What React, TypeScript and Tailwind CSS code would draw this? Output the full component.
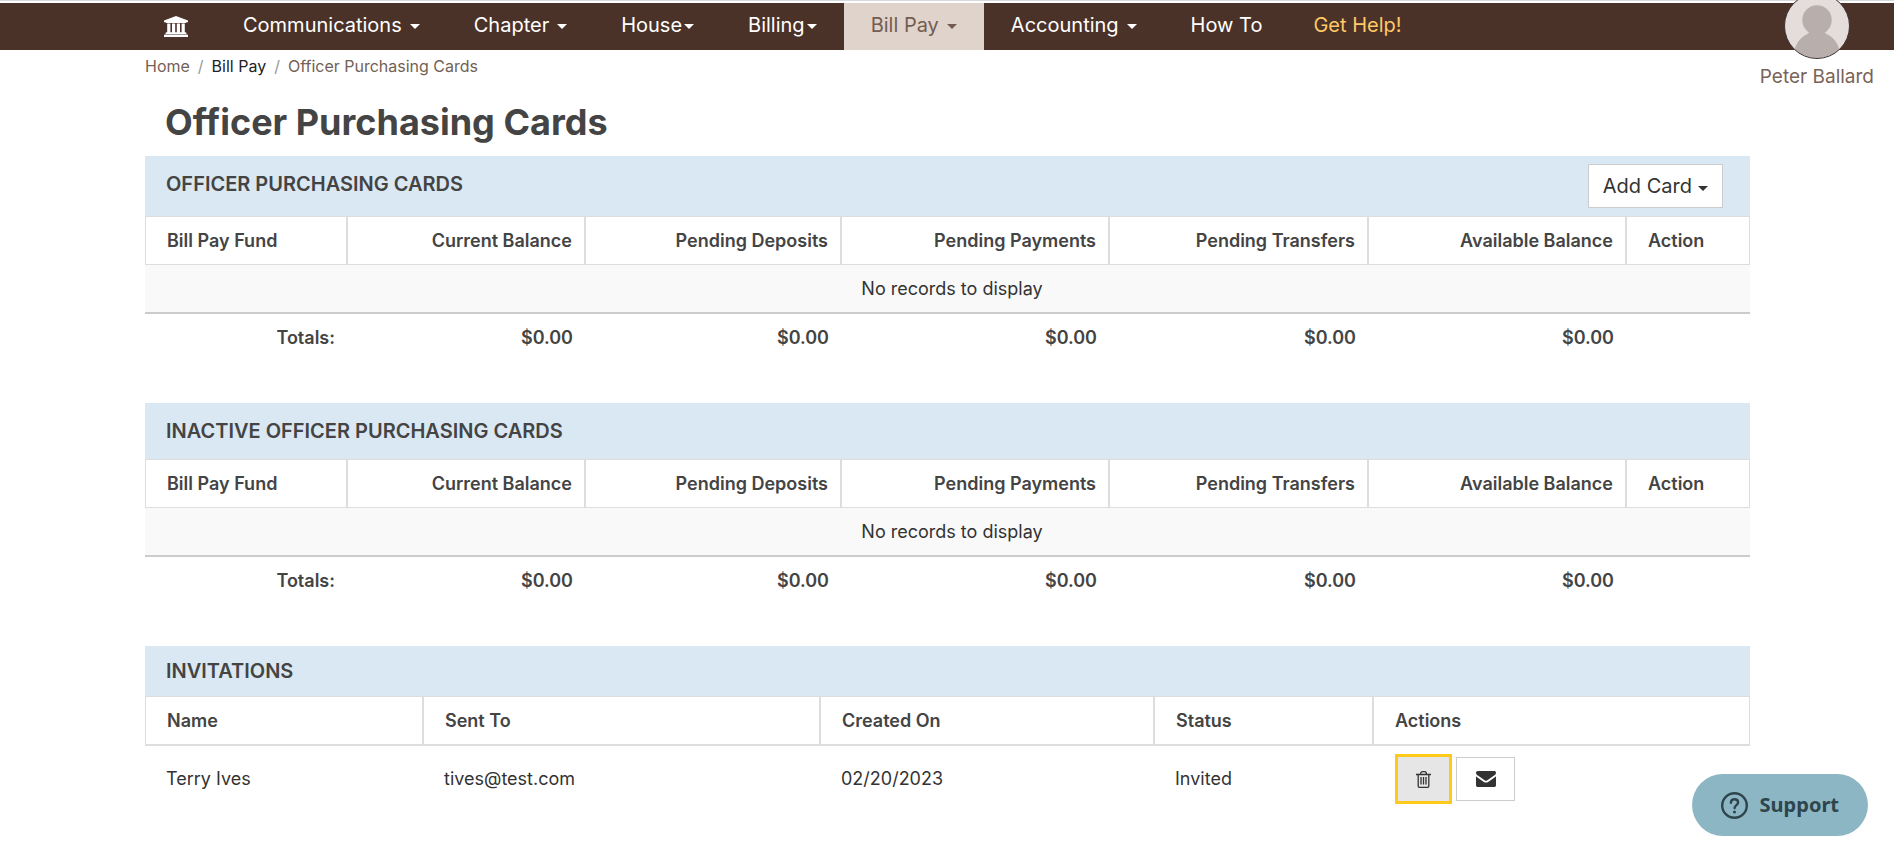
import type { ReactNode } from 'react';

type NavItem = { label: string; caret?: 'spaced' | 'tight'; active?: boolean };

const NAV_ITEMS: NavItem[] = [
  { label: 'Communications', caret: 'spaced' },
  { label: 'Chapter',        caret: 'spaced' },
  { label: 'House',          caret: 'tight'  },
  { label: 'Billing',        caret: 'tight'  },
  { label: 'Bill Pay',       caret: 'spaced', active: true },
  { label: 'Accounting',     caret: 'spaced' },
  { label: 'How To' },
];

const BALANCE_COLUMNS = [
  'Current Balance',
  'Pending Deposits',
  'Pending Payments',
  'Pending Transfers',
  'Available Balance',
];

const INVITATIONS = [
  { name: 'Terry Ives', sentTo: 'tives@test.com', createdOn: '02/20/2023', status: 'Invited' },
];

function Caret({ className = '' }: { className?: string }) {
  return (
    <span
      aria-hidden="true"
      className={`inline-block border-x-5 border-t-5 border-x-transparent border-t-current align-middle ${className}`}
    />
  );
}

function BankIcon() {
  return (
    <svg viewBox="0 0 24 21" className="h-[21px] w-6" fill="currentColor" aria-hidden="true">
      <path d="M12 0 24 4.6v1.6h-1.6c0 .5-.4.8-.9.8h-19c-.5 0-.9-.3-.9-.8H0V4.6z" />
      <path d="M3.2 7.600h3.200v8.600H8V7.600h3.200v8.600h1.600V7.600H16v8.600h1.600V7.600h3.200v8.600h.7c.5 0 .9.400.9.800v.9H1.600V17c0-.4.4-.8.9-.8h.7z" />
      <path d="M.9 18.600h22.200c.5 0 .9.400.9.800V21H0v-1.600c0-.4.4-.8.9-.8z" />
    </svg>
  );
}

function TrashIcon() {
  return (
    <svg viewBox="0 0 15 17" className="h-[17px] w-[15px]" fill="none" stroke="currentColor" strokeWidth="1.3" aria-hidden="true">
      <path d="M0 3.500h15M4.500 3.200C4.500 1.500 5.500.7 6.500.7h2c1 0 2 .8 2 2.500" />
      <path d="M2.200 3.600v11.400c0 .9.400 1.300 1.200 1.300h8.200c.8 0 1.200-.4 1.200-1.300V3.600" />
      <path d="M5 6v7.500M7.500 6v7.500M10 6v7.500" />
    </svg>
  );
}

function EnvelopeIcon() {
  return (
    <svg viewBox="0 0 20 16" className="h-4 w-5" fill="currentColor" aria-hidden="true">
      <path d="M1.800 0h16.400c1 0 1.800.7 1.800 1.700 0 1.200-.9 2.200-1.900 2.900l-6 4.100c-.6.4-1.400 1-2.100 1s-1.500-.6-2.100-1l-6-4.100C1.100 4.100 0 2.900 0 1.900 0 .8.600 0 1.800 0z" />
      <path d="M0 5.300c.3.400.7.700 1.100 1l5.700 3.900c.9.600 2 1.400 3.200 1.400s2.300-.8 3.200-1.400l5.700-3.900c.4-.3.800-.6 1.100-1v8.900c0 1-.8 1.800-1.800 1.800H1.800C.8 16 0 15.200 0 14.200z" />
    </svg>
  );
}

function HelpIcon() {
  return (
    <svg viewBox="0 0 27 27" className="size-[27px]" fill="none" stroke="currentColor" aria-hidden="true">
      <circle cx="13.500" cy="13.500" r="12.300" strokeWidth="2.400" />
      <path d="M9.900 10.700c0-2.100 1.500-3.500 3.600-3.500s3.600 1.300 3.600 3.200c0 2.600-3.500 2.900-3.500 5.700" strokeWidth="2.400" strokeLinecap="round" />
      <circle cx="13.500" cy="20" r="1.500" fill="currentColor" stroke="none" />
    </svg>
  );
}

function Avatar() {
  return (
    <svg viewBox="0 0 66 66" className="size-[66px]" aria-hidden="true">
      <defs>
        <clipPath id="avatar-clip">
          <circle cx="33" cy="33" r="32" />
        </clipPath>
      </defs>
      <circle cx="33" cy="33" r="32.500" fill="#e5dddb" />
      <g clipPath="url(#avatar-clip)" fill="#b8afac">
        <circle cx="33" cy="27" r="14.700" />
        <path d="M26 37h14c0 3 2 3.500 5 5.300 6 3.700 10 10 11 17.700v9H10v-9c1-7.700 5-14 11-17.700 3-1.800 5-2.300 5-5.300z" />
      </g>
      <circle cx="33" cy="33" r="32.500" fill="none" stroke="#3b3230" />
    </svg>
  );
}

function NavBar() {
  return (
    <header className="relative border-t border-[#d9d9dc] pt-0.5">
      <nav className="flex h-[47px] items-stretch bg-[#4b3228] pl-[136px] text-xl text-white">
        <a href="#" aria-label="Home" className="flex items-center px-7">
          <BankIcon />
        </a>
        {NAV_ITEMS.map(({ label, caret, active }) => (
          <a
            key={label}
            href="#"
            className={`flex items-center px-[27px] pb-1 whitespace-nowrap ${
              active ? 'bg-[#e0d3cb] text-[#735c51]' : ''
            }`}
          >
            {label}
            {caret && <Caret className={caret === 'spaced' ? 'mt-1 ml-2' : 'mt-1 ml-0.5'} />}
          </a>
        ))}
        <a href="#" className="flex items-center px-6 pb-1 whitespace-nowrap text-[#ffc966]">
          Get Help!
        </a>
      </nav>

      {/* User badge hangs over the bottom edge of the bar */}
      <a
        href="#"
        className="absolute -top-2 right-5 flex flex-col items-center gap-1 text-[19px] leading-7 text-[#7a6357]"
      >
        <Avatar />
        Peter Ballard
      </a>
    </header>
  );
}

function Breadcrumb() {
  return (
    <nav aria-label="Breadcrumb" className="flex gap-2 pt-1 text-base text-[#735f55]">
      <a href="#">Home</a>
      <span className="text-[#999]">/</span>
      <a href="#" className="text-[#222]">Bill Pay</a>
      <span className="text-[#999]">/</span>
      <span>Officer Purchasing Cards</span>
    </nav>
  );
}

function SectionTitle({ children }: { children: ReactNode }) {
  return <h2 className="text-xl leading-6 font-semibold text-[#444] uppercase">{children}</h2>;
}

function FundTable() {
  return (
    <table className="w-full table-fixed border-separate border-spacing-0 text-lg leading-6">
      <colgroup>
        <col className="w-[202px]" />
        <col className="w-[238px]" />
        <col className="w-[256px]" />
        <col className="w-[268px]" />
        <col className="w-[259px]" />
        <col className="w-[258px]" />
        <col className="w-[124px]" />
      </colgroup>
      <thead>
        <tr className="h-[49px] text-[#444]">
          <th className="border border-[#ddd] pr-3 pl-[21px] text-left font-semibold">Bill Pay Fund</th>
          {BALANCE_COLUMNS.map(label => (
            <th key={label} className="border border-[#ddd] pr-3 text-right font-semibold">
              {label}
            </th>
          ))}
          <th className="border border-[#ddd] pr-3 pl-[21px] text-left font-semibold">Action</th>
        </tr>
      </thead>
      <tbody>
        <tr className="h-[49px] bg-[#f9f9f9]">
          <td colSpan={7} className="border-b-2 border-[#ccc] pr-3 pl-[21px] text-center">
            No records to display
          </td>
        </tr>
      </tbody>
      <tfoot>
        <tr className="h-12 font-semibold text-[#444]">
          <td className="pr-3 text-right">Totals:</td>
          {BALANCE_COLUMNS.map(label => (
            <td key={label} className="pr-3 text-right">$0.00</td>
          ))}
          <td />
        </tr>
      </tfoot>
    </table>
  );
}

function InvitationsTable() {
  return (
    <table className="w-full table-fixed border-separate border-spacing-0 text-lg leading-6">
      <colgroup>
        <col className="w-[278px]" />
        <col className="w-[397px]" />
        <col className="w-[334px]" />
        <col className="w-[219px]" />
        <col className="w-[377px]" />
      </colgroup>
      <thead>
        <tr className="h-[50px] text-[#444]">
          {['Name', 'Sent To', 'Created On', 'Status', 'Actions'].map(label => (
            <th key={label} className="border border-b-2 border-[#ddd] pl-[21px] text-left font-semibold">
              {label}
            </th>
          ))}
        </tr>
      </thead>
      <tbody>
        {INVITATIONS.map(invite => (
          <tr key={invite.sentTo} className="h-[66px]">
            <td className="pl-[21px]">{invite.name}</td>
            <td className="pl-[21px]">{invite.sentTo}</td>
            <td className="pl-[21px]">{invite.createdOn}</td>
            <td className="pl-[21px]">{invite.status}</td>
            <td className="pl-[22px]">
              <div className="flex items-center gap-1">
                <button
                  type="button"
                  aria-label="Delete invitation"
                  className="flex h-[50px] w-[57px] items-center justify-center border-3 border-[#ffc91a] bg-[#e6e6e6]"
                >
                  <TrashIcon />
                </button>
                <button
                  type="button"
                  aria-label="Resend invitation"
                  className="flex h-11 w-[59px] items-center justify-center border border-[#ccc] bg-white"
                >
                  <EnvelopeIcon />
                </button>
              </div>
            </td>
          </tr>
        ))}
      </tbody>
    </table>
  );
}

export default function App() {
  return (
    <div className="min-h-screen bg-white font-['Inter',sans-serif] text-[#333]">
      <NavBar />

      <main className="pr-36 pl-[145px]">
        <Breadcrumb />
        <h1 className="pt-5 pb-2.5 pl-5 text-4xl leading-12 font-bold text-[#444]">Officer Purchasing Cards</h1>

        <div className="flex flex-col gap-[41px]">
          {/* Active cards */}
          <section>
            <div className="flex items-start justify-between bg-[#dae8f3] py-2 pr-[27px] pl-[21px]">
              <div className="pt-2">
                <SectionTitle>Officer Purchasing Cards</SectionTitle>
              </div>
              <button
                type="button"
                className="flex h-11 items-center border border-[#ccc] bg-white px-3.5 text-xl"
              >
                Add Card
                <Caret className="mt-1 ml-1.5" />
              </button>
            </div>
            <FundTable />
          </section>

          {/* Inactive cards */}
          <section>
            <div className="bg-[#dae8f3] py-4 pl-[21px]">
              <SectionTitle>Inactive Officer Purchasing Cards</SectionTitle>
            </div>
            <FundTable />
          </section>

          {/* Pending invitations */}
          <section>
            <div className="bg-[#dae8f3] py-[13px] pl-[21px]">
              <SectionTitle>Invitations</SectionTitle>
            </div>
            <InvitationsTable />
          </section>
        </div>
      </main>

      <button
        type="button"
        className="fixed right-[26px] bottom-[17px] flex h-[62px] items-center gap-3 rounded-full bg-[#8cb6c4] px-[29px] font-['Noto_Sans',sans-serif] text-xl font-bold text-[#2f454d]"
      >
        <HelpIcon />
        Support
      </button>
    </div>
  );
}
